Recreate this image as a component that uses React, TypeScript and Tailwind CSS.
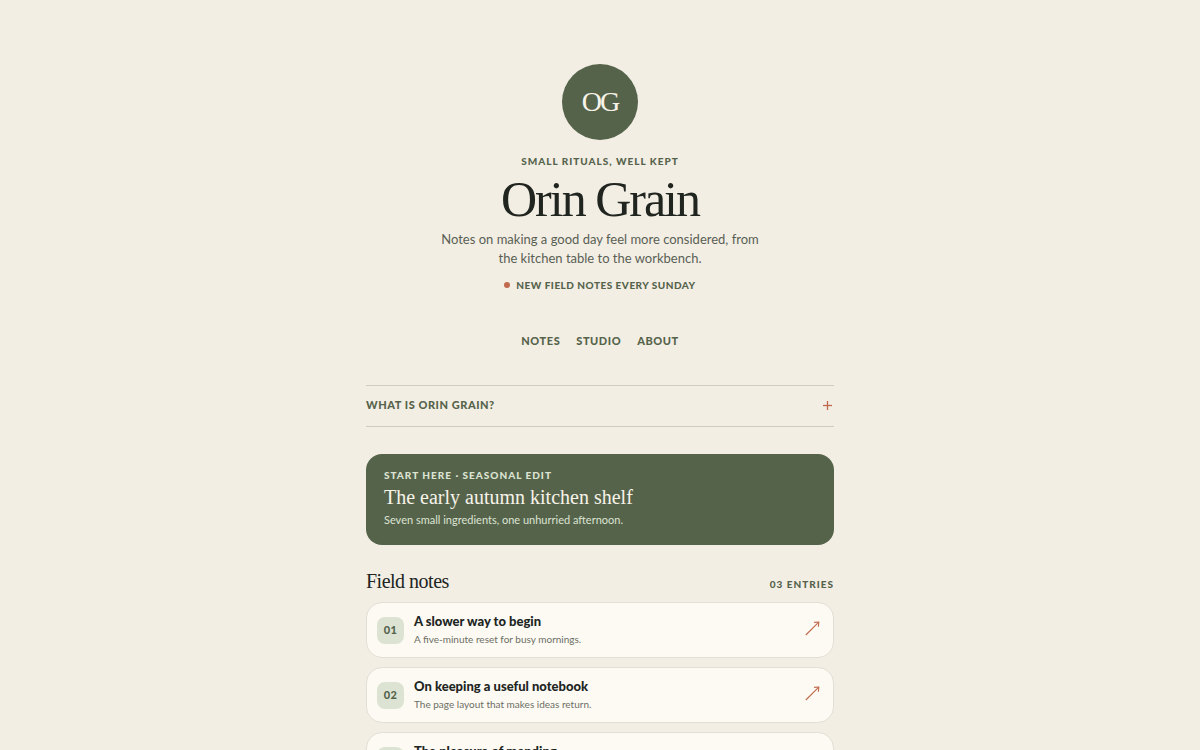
import { useState } from "react";

type Note = {
  id: string;
  title: string;
  summary: string;
};

const notes: Note[] = [
  { id: "01", title: "A slower way to begin", summary: "A five-minute reset for busy mornings." },
  { id: "02", title: "On keeping a useful notebook", summary: "The page layout that makes ideas return." },
  { id: "03", title: "The pleasure of mending", summary: "Small repairs for well-loved things." },
];

const links = ["Notes", "Studio", "About"];

function ArrowIcon() {
  return (
    <svg viewBox="0 0 16 20" className="h-5 w-4 text-[#c0694c]" fill="none" stroke="currentColor" aria-hidden="true">
      <path d="M0.8 15 13.5 2.3" strokeWidth="1.1" />
      <path d="M9.1 2.4 13.8 2 13.4 6.7" strokeWidth="1.1" />
    </svg>
  );
}

function NoteCard({ note }: { note: Note }) {
  return (
    <li>
      <a
        href={`#note-${note.id}`}
        className="flex items-center gap-2.5 rounded-2xl border border-[#e2dfd6] bg-[#fdfaf3] py-[9px] pr-3 pl-2.5"
      >
        <span className="flex size-[27px] shrink-0 items-center justify-center rounded-lg bg-[#dce3d3] text-[11px] font-black tracking-wide text-[#56634b]">
          {note.id}
        </span>
        <span className="flex min-w-0 flex-1 flex-col">
          <strong className="text-[13px] leading-[18px] font-black text-[#20251f]">{note.title}</strong>
          <span className="text-[10px] leading-[18px] text-[#6b6f65]">{note.summary}</span>
        </span>
        <ArrowIcon />
      </a>
    </li>
  );
}

function About() {
  const [open, setOpen] = useState(false);

  return (
    <section className="mt-[35px] border-y border-[#cfccc1]">
      <button
        type="button"
        aria-expanded={open}
        onClick={() => setOpen(!open)}
        className="flex w-full cursor-pointer items-center justify-between pt-2.5 pb-3 text-[11px] leading-[18px] font-black tracking-wider text-[#56634b] uppercase"
      >
        What is Orin Grain?
        <svg viewBox="0 0 12 12" className="size-3 text-[#c0694c]" stroke="currentColor" aria-hidden="true">
          <path d="M1 6.5h9" strokeWidth="1.3" />
          {!open && <path d="M5.5 2v9" strokeWidth="1.3" />}
        </svg>
      </button>
      {open && (
        <p className="pb-4 text-[13px] leading-[19px] text-[#5a5f54]">
          A small journal of rituals, recipes and things made by hand.
        </p>
      )}
    </section>
  );
}

export default function App() {
  return (
    <div className="min-h-screen bg-[#f2eee4] px-4 pt-16 pb-16 font-[Lato,'Open_Sans',sans-serif] text-[#20251f]">
      <main className="mx-auto w-full max-w-[468px]">
        <header className="flex flex-col items-center text-center">
          <div className="flex size-19 items-center justify-center rounded-full bg-[#56634b] font-['Liberation_Serif',serif] text-[28px] tracking-[-2px] text-[#f7f3e9]">
            OG
          </div>
          <p className="mt-3 text-[10px] leading-[18px] font-black tracking-[1px] text-[#56634b] uppercase">
            Small rituals, well kept
          </p>
          <h1 className="mt-1 font-['Liberation_Serif',serif] text-[50px] leading-[50px] tracking-[-2px]">
            Orin Grain
          </h1>
          <p className="mt-1.5 max-w-[336px] text-[13px] leading-[19px] text-[#5a5f54]">
            Notes on making a good day feel more considered, from the kitchen table to the workbench.
          </p>
          <p className="mt-2 flex items-center gap-1.5 text-[10px] leading-[18px] font-black tracking-wider text-[#56634b] uppercase">
            <span className="size-1.5 rounded-full bg-[#c0694c]" />
            New field notes every Sunday
          </p>
        </header>

        <nav className="mt-[38px] flex justify-center gap-4">
          {links.map((link) => (
            <a
              key={link}
              href={`#${link.toLowerCase()}`}
              className="text-[11px] leading-[18px] font-black tracking-wider text-[#56634b] uppercase"
            >
              {link}
            </a>
          ))}
        </nav>

        <About />

        <a href="#seasonal" className="mt-[27px] block rounded-2xl bg-[#56634b] px-[18px] pt-3 pb-4 text-[#f7f3e9]">
          <p className="text-[10px] leading-[18px] font-black tracking-[1px] text-[#dce3d3] uppercase">
            Start here · Seasonal edit
          </p>
          <h2 className="font-['Liberation_Serif',serif] text-[20px] leading-[27px]">The early autumn kitchen shelf</h2>
          <p className="text-[11px] leading-[18px] text-[#dce3d3]">Seven small ingredients, one unhurried afternoon.</p>
        </a>

        <section className="mt-[23px]">
          <div className="flex items-baseline justify-between">
            <h2 className="font-['Liberation_Serif',serif] text-[20px] leading-[26px] tracking-tight">Field notes</h2>
            <span className="text-[10px] font-black tracking-[1px] text-[#56634b] uppercase">03 entries</span>
          </div>
          <ul className="mt-2 flex flex-col gap-[9px]">
            {notes.map((note) => (
              <NoteCard key={note.id} note={note} />
            ))}
          </ul>
        </section>
      </main>
    </div>
  );
}
